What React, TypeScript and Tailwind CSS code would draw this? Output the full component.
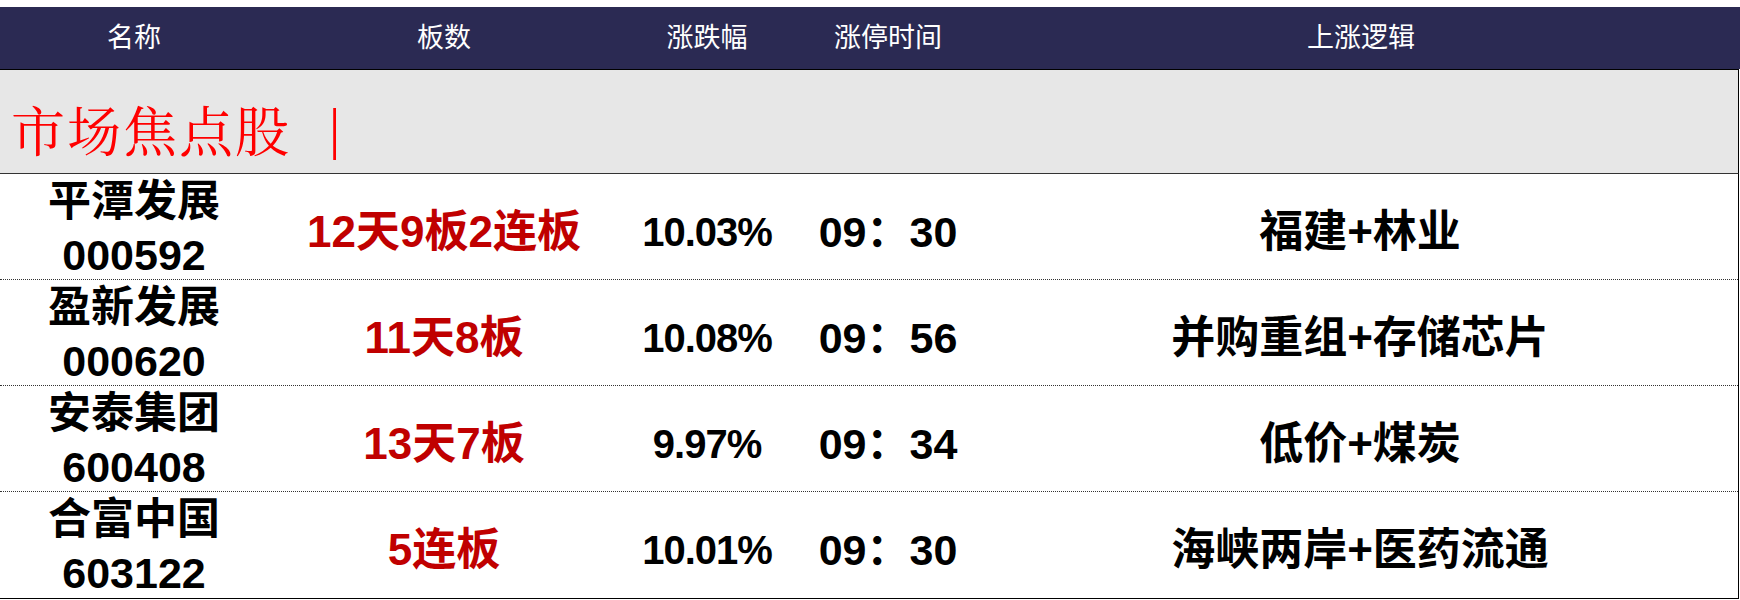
const rows = [
  { name: '平潭发展', code: '000592', board: '12天9板2连板', pct: '10.03%', time: '09：30', logic: '福建+林业' },
  { name: '盈新发展', code: '000620', board: '11天8板', pct: '10.08%', time: '09：56', logic: '并购重组+存储芯片' },
  { name: '安泰集团', code: '600408', board: '13天7板', pct: '9.97%', time: '09：34', logic: '低价+煤炭' },
  { name: '合富中国', code: '603122', board: '5连板', pct: '10.01%', time: '09：30', logic: '海峡两岸+医药流通' },
];

const cols = 'grid grid-cols-[268px_352px_174px_188px_1fr]';
const sans = "font-['Liberation_Sans','Noto_Sans_CJK_SC',sans-serif]";

export default function App() {
  return (
    <div className="w-[1740px] h-[600px] bg-white pt-[7px]">
      {/* header */}
      <div className={`${cols} h-[62px] items-center bg-[#2b2a53] text-white text-[27px] ${sans}`}>
        <div className="text-center">名称</div>
        <div className="text-center">板数</div>
        <div className="text-center">涨跌幅</div>
        <div className="text-center">涨停时间</div>
        <div className="text-center">上涨逻辑</div>
      </div>

      {/* section title */}
      <div className="w-[1739px] border-t border-black border-r border-r-black border-b border-b-dotted border-b-[#333] bg-[#e7e7e7] h-[105px] flex items-center pt-[14px] pl-[11px]">
        <span className="text-[#ff0000] text-[54px] leading-none tracking-[2px] font-['Noto_Serif_CJK_SC','Noto_Sans_CJK_SC',serif]">
          市场焦点股
        </span>
        <span className="ml-[38px] text-[#ff0000] text-[56px] leading-none font-['Liberation_Serif',serif]">|</span>
      </div>

      {/* rows */}
      <div className={`w-[1739px] border-r border-black border-b ${sans} font-bold`}>
        {rows.map((r, i) => (
          <div
            key={r.code}
            className={`${cols} h-[106px] items-center ${i < rows.length - 1 ? 'border-b border-dotted border-[#333]' : ''}`}
          >
            <div className="text-center text-black text-[43px] leading-[54px]">
              <div>{r.name}</div>
              <div>{r.code}</div>
            </div>
            <div className="text-center text-[#c00000] text-[44px] pt-[8px]">{r.board}</div>
            <div className="text-center text-black text-[40px] tracking-[-1px] pt-[8px]">{r.pct}</div>
            <div className="text-center text-black text-[43px] pt-[8px]">{r.time}</div>
            <div className="text-center text-black text-[44px] pt-[8px]">{r.logic}</div>
          </div>
        ))}
      </div>
    </div>
  );
}
